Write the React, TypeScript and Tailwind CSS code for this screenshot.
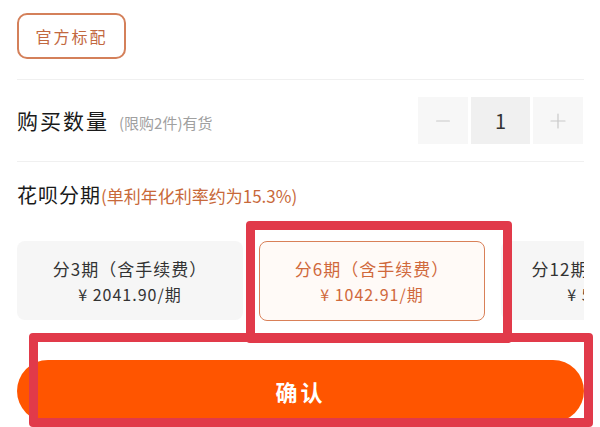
import { Minus, Plus } from "lucide-react";

type Plan = {
  label: string;
  price: string;
  selected?: boolean;
};

const plans: Plan[] = [
  { label: "分3期（含手续费）", price: "¥ 2041.90/期" },
  { label: "分6期（含手续费）", price: "¥ 1042.91/期", selected: true },
  { label: "分12期（含手续费）", price: "¥ 528.33/期" },
];

function PlanCard({ plan }: { plan: Plan }) {
  return (
    <div
      className={
        plan.selected
          ? "flex h-[80px] w-[226px] shrink-0 flex-col items-center justify-center gap-[4px] rounded-[8px] border-[1.5px] border-[#d98058] bg-[#fffaf7] text-[#d0693c]"
          : "flex h-[79px] w-[226px] shrink-0 flex-col items-center justify-center gap-[4px] rounded-[8px] bg-[#f6f6f6] text-[#333333]"
      }
    >
      <div className="text-[17px] leading-[22px] tracking-[1px]">{plan.label}</div>
      <div className="text-[16px] leading-[20px] tracking-[1px]">{plan.price}</div>
    </div>
  );
}

export default function App() {
  return (
    <div className="relative h-[427px] w-[600px] overflow-hidden bg-white font-['Noto_Sans_CJK_SC',sans-serif]">
      <div className="pl-[17px] pr-[16px] pt-[13px]">
        {/* Spec tag */}
        <div className="flex h-[46px] w-[109px] items-center justify-center rounded-[10px] border-2 border-[#d4805a] text-[16px] tracking-[2px] text-[#c2683f]">
          官方标配
        </div>

        <div className="mt-[20px] h-px bg-[#f0f0f0]" />

        {/* Quantity */}
        <div className="flex h-[81px] items-center justify-between">
          <div className="flex items-baseline gap-[10px]">
            <span className="text-[21px] tracking-[2px] text-[#1a1a1a]">购买数量</span>
            <span className="text-[15px] text-[#a0a0a0]">(限购2件)有货</span>
          </div>
          <div className="mr-px flex h-[47px] gap-[3px]">
            <div className="flex w-[50px] items-center justify-center bg-[#f7f7f7] text-[#c9c9c9]">
              <Minus size={22} strokeWidth={1.2} />
            </div>
            <div className="flex w-[59px] items-center justify-center bg-[#f0f0f0] text-[20px] text-[#333333]">
              1
            </div>
            <div className="flex w-[50px] items-center justify-center bg-[#f7f7f7] text-[#c9c9c9]">
              <Plus size={24} strokeWidth={1.2} />
            </div>
          </div>
        </div>

        <div className="h-px bg-[#f0f0f0]" />

        {/* Installments */}
        <div className="mt-[19px] flex items-baseline text-[20px] leading-[28px]">
          <span className="tracking-[1px] text-[#1a1a1a]">花呗分期</span>
          <span className="text-[17px] text-[#c8693a]">(单利年化利率约为15.3%)</span>
        </div>

        <div className="mt-[31px] flex items-start gap-[16px] overflow-hidden">
          {plans.map((p) => (
            <PlanCard key={p.label} plan={p} />
          ))}
        </div>

        <button className="mt-[39px] flex h-[62px] w-full items-center justify-center rounded-full bg-[#ff5500] text-[22px] font-bold tracking-[3px] text-white">
          确认
        </button>
      </div>

      {/* Annotation boxes */}
      <div className="absolute left-[246px] top-[221px] h-[122px] w-[266px] rounded-[4px] border-[9px] border-[#e13a4a]" />
      <div className="absolute left-[29px] top-[333px] h-[94px] w-[564px] rounded-[4px] border-[9px] border-[#e13a4a]" />
    </div>
  );
}
